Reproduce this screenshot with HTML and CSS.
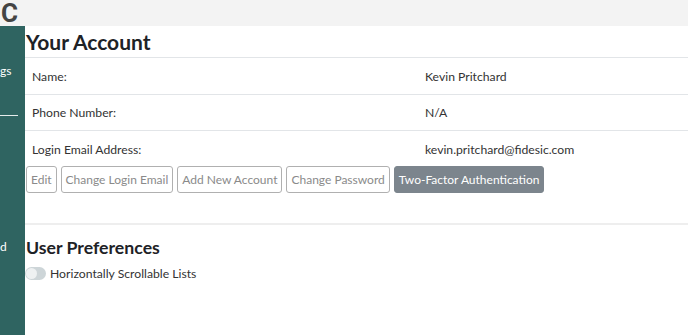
FILE: index.html
```html
<!DOCTYPE html>
<html lang="en">
<head>
<meta charset="utf-8">
<title>Your Account</title>
<link rel="stylesheet" href="styles.css">
</head>
<body>
<header class="topbar"><span class="brand">C</span></header>
<div class="layout">
  <nav class="sidebar">
    <div class="nav-item nav-first">gs</div>
    <div class="nav-rule"></div>
    <div class="nav-item nav-last">d</div>
  </nav>
  <main class="main">
    <h2 class="title">Your Account</h2>
    <div class="info">
      <div class="row"><div class="cell label">Name:</div><div class="cell value">Kevin Pritchard</div></div>
      <div class="row"><div class="cell label">Phone Number:</div><div class="cell value">N/A</div></div>
      <div class="row"><div class="cell label">Login Email Address:</div><div class="cell value">kevin.pritchard@fidesic.com</div></div>
    </div>
    <div class="actions">
      <button class="btn">Edit</button>
      <button class="btn">Change Login Email</button>
      <button class="btn">Add New Account</button>
      <button class="btn">Change Password</button>
      <button class="btn btn-dark">Two-Factor Authentication</button>
    </div>
    <hr class="divider">
    <h3 class="subtitle">User Preferences</h3>
    <label class="pref"><span class="toggle"><span class="knob"></span></span>Horizontally Scrollable Lists</label>
  </main>
</div>
</body>
</html>
```
FILE: styles.css
```css
* { box-sizing: border-box; }
html, body { margin: 0; height: 100%; }
body {
  font-family: "Lato", "Open Sans", sans-serif;
  color: #212529;
  background: #fff;
  overflow: hidden;
}
.topbar {
  height: 26px;
  background: #f3f3f3;
  display: flex;
  align-items: center;
  padding-left: 1px;
}
.brand {
  font-family: "Roboto", sans-serif;
  font-weight: 700;
  font-size: 26px;
  line-height: 26px;
  color: #444;
}
.layout {
  display: flex;
  height: calc(100% - 26px);
}
.sidebar {
  width: 25px;
  flex: none;
  background: #2f6461;
  overflow: hidden;
  color: #fff;
  font-size: 12px;
  padding-top: 37px;
}
.nav-item {
  white-space: nowrap;
  height: 16px;
  line-height: 16px;
}
.nav-rule {
  width: 18px;
  height: 1px;
  background: #e6ecec;
  margin-top: 36px;
}
.nav-last { margin-top: 123px; }
.main {
  flex: 1;
  min-width: 0;
}
.title {
  margin: 0 0 0 1px;
  font-size: 21px;
  font-weight: 700;
  line-height: 31px;
  color: #1e2226;
}
.info { font-size: 12.2px; color: #333; }
.row {
  display: grid;
  grid-template-columns: 393px 1fr;
  border-top: 1px solid #e2e5e8;
  height: 36.5px;
  align-items: center;
}
.cell { padding-left: 7px; padding-top: 1px; }
.actions {
  display: flex;
  gap: 4px;
  padding-left: 1px;
  margin-top: -1px;
}
.btn {
  font-family: inherit;
  font-size: 12px;
  height: 27px;
  padding: 0 4px;
  border: 1px solid #b0b0b0;
  border-radius: 3px;
  background: #fff;
  color: #8a8a8a;
}
.btn-dark {
  background: #7c858d;
  border-color: #7c858d;
  color: #fff;
  padding: 0 4px;
}
.divider {
  border: 0;
  height: 2px;
  background: #eeeeee;
  margin: 30px 0 0;
}
.subtitle {
  margin: 12px 0 0 1px;
  font-size: 17.7px;
  font-weight: 700;
  line-height: 22px;
  color: #1e2226;
}
.pref {
  display: flex;
  align-items: center;
  gap: 4px;
  margin-top: 7px;
  font-size: 12.2px;
  color: #333;
}
.toggle {
  width: 21px;
  height: 13px;
  border-radius: 7px;
  background: #cdd5d8;
  display: flex;
  align-items: center;
  padding-left: 1px;
}
.knob {
  width: 11px;
  height: 11px;
  border-radius: 50%;
  background: #eef1f2;
}
```
